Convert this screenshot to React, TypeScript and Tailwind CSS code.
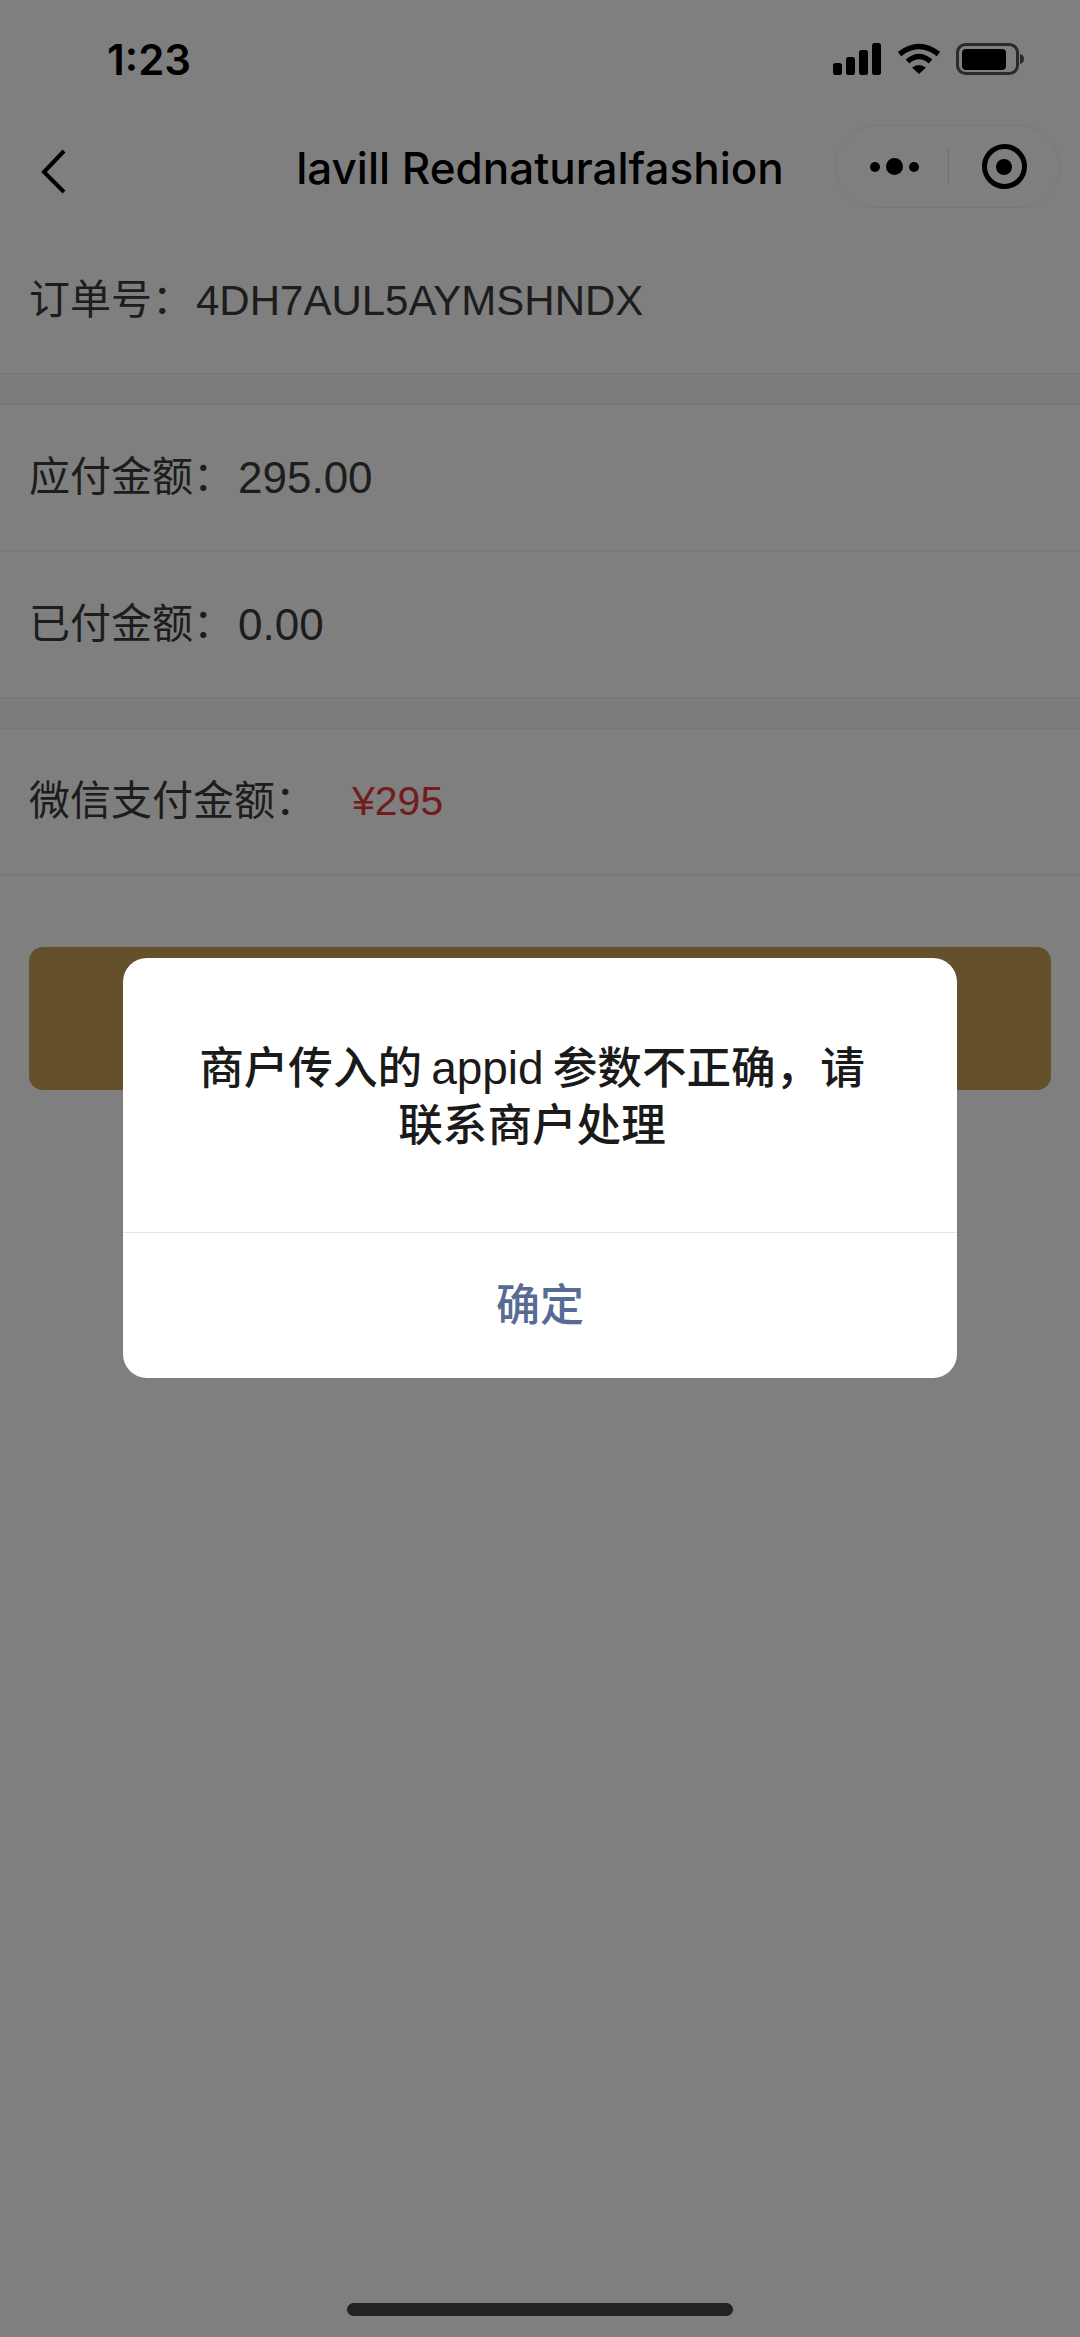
import React from 'react';

const cjk = "font-['Liberation_Sans','Noto_Sans_CJK_SC',sans-serif]";

const Row = ({ label, value, valueClass }: { label: string; value: string; valueClass: string }) => (
  <div className="flex h-[147px] items-center border-b-2 border-[#f0f0f0] pl-[29px] text-[41px] text-[#3a3a3a]">
    <span>{label}</span>
    <span className={valueClass}>{value}</span>
  </div>
);

const App: React.FC = () => {
  return (
    <div className={`relative h-[2337px] w-[1080px] overflow-hidden bg-white ${cjk}`}>
      {/* Status bar */}
      <div className="flex h-[118px] items-center justify-between pl-[107px] pr-[56px]">
        <span className="font-['Inter',sans-serif] text-[42px] font-semibold text-black">1:23</span>
        <div className="flex items-center gap-[16px]">
          <svg width="50" height="32" viewBox="0 0 50 32" fill="#000">
            <rect x="1" y="20" width="9" height="12" rx="2.5" />
            <rect x="14" y="14" width="9" height="18" rx="2.5" />
            <rect x="27" y="7" width="9" height="25" rx="2.5" />
            <rect x="40" y="0" width="9" height="32" rx="2.5" />
          </svg>
          <svg width="42" height="32" viewBox="0 0 42 32" fill="none" stroke="#000" strokeWidth="5.5">
            <path d="M1.5 11 Q21 -4 40.5 11" />
            <path d="M9.5 18.5 Q21 8.5 32.5 18.5" />
            <path d="M21 31 L14 24.5 Q21 19.5 28 24.5 Z" fill="#000" stroke="none" />
          </svg>
          <svg width="68" height="32" viewBox="0 0 68 32" fill="none">
            <rect x="1.5" y="1.5" width="60" height="29" rx="8" stroke="#555" strokeWidth="3" />
            <rect x="6" y="6" width="44" height="21" rx="4" fill="#000" />
            <path d="M64 11 Q68 12 68 16 Q68 20 64 21 Z" fill="#555" />
          </svg>
        </div>
      </div>

      {/* Nav bar */}
      <div className="relative flex h-[110px] items-center justify-center">
        <svg className="absolute left-[40px] top-[29px]" width="28" height="48" viewBox="0 0 28 48" fill="none" stroke="#000" strokeWidth="4">
          <path d="M24 4 L4 25 L24 45" />
        </svg>
        <span className="mb-[10px] font-['Inter',sans-serif] text-[44px] font-medium text-black">lavill Rednaturalfashion</span>
        <div className="absolute left-[835px] top-[7px] flex h-[83px] w-[225px] items-center rounded-full border border-[#f0f0f0]">
          <div className="flex w-[113px] items-center justify-center gap-[6px] border-r border-[#dcdcdc] py-[9px] pl-[5px]">
            <span className="h-[10px] w-[10px] rounded-full bg-black" />
            <span className="h-[17px] w-[17px] rounded-full bg-black" />
            <span className="h-[10px] w-[10px] rounded-full bg-black" />
          </div>
          <div className="flex flex-1 items-center justify-center">
            <div className="flex h-[45px] w-[45px] items-center justify-center rounded-full border-[5px] border-black">
              <span className="h-[16px] w-[16px] rounded-full bg-black" />
            </div>
          </div>
        </div>
      </div>

      {/* Order */}
      <Row label="订单号：" value="4DH7AUL5AYMSHNDX" valueClass="ml-[3px] text-[42px]" />
      <div className="h-[30px] border-b-2 border-[#f0f0f0] bg-[#f9f9f9]" />
      <Row label="应付金额：" value="295.00" valueClass="ml-[4px] text-[44px]" />
      <Row label="已付金额：" value="0.00" valueClass="ml-[4px] text-[44px]" />
      <div className="h-[30px] border-b-2 border-[#f0f0f0] bg-[#f9f9f9]" />
      <Row label="微信支付金额：" value="¥295" valueClass="ml-[36px] text-[#e4393c]" />

      <div className="mx-[29px] mt-[71px] h-[143px] rounded-[14px] bg-[#c9a258]" />

      {/* Mask */}
      <div className="absolute inset-0 bg-black/50" />

      {/* Home indicator */}
      <div className="absolute bottom-[21px] left-[347px] h-[13px] w-[386px] rounded-full bg-[#222222]" />

      {/* Dialog */}
      <div className="absolute left-[123px] top-[958px] w-[834px] overflow-hidden rounded-[24px] bg-white">
        <div className="h-[274px] pl-[60px] pr-[76px] pt-[82px] text-center text-[44.6px] font-medium leading-[57px] text-[#1a1a1a]">
          <p>
            商户传入的<span className="mx-[9px] text-[46px] font-normal leading-[40px]">appid</span>参数不正确，请联系商户处理
          </p>
        </div>
        <div className="flex h-[146px] items-center justify-center border-t border-[#e5e5e5] text-[44px] font-medium text-[#576b95]">
          确定
        </div>
      </div>
    </div>
  );
};

export default App;
